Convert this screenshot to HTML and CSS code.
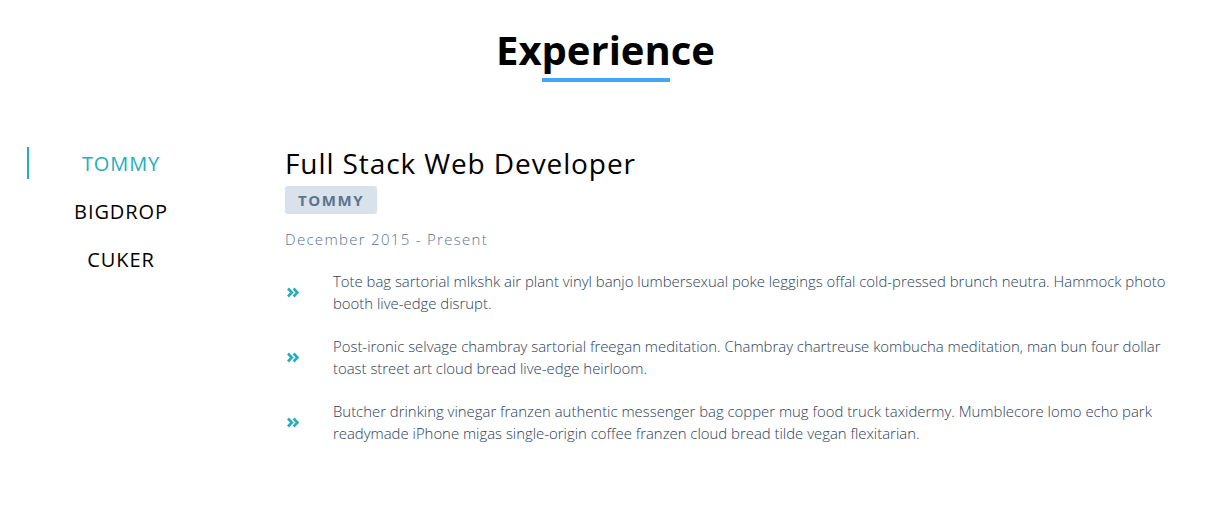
FILE: index.html
```html
<!DOCTYPE html>
<html>
<head>
<meta charset="utf-8">
<link rel="stylesheet" href="styles.css">
</head>
<body>
<section class="experience">
  <header class="section-head">
    <h1 class="section-title">Experience</h1>
    <div class="title-bar"></div>
  </header>
  <div class="exp-body">
    <nav class="tabs">
      <div class="tab active">TOMMY</div>
      <div class="tab">BIGDROP</div>
      <div class="tab">CUKER</div>
    </nav>
    <div class="job">
      <h2 class="job-title">Full Stack Web Developer</h2>
      <span class="badge">TOMMY</span>
      <div class="date">December 2015 - Present</div>
      <ul class="duties">
        <li><span class="chev"><svg width="12" height="11" viewBox="0 0 12 11"><path d="M1 1.5 L4.8 5.5 L1 9.5 M6.6 1.5 L10.4 5.5 L6.6 9.5" fill="none" stroke="currentColor" stroke-width="2.6"/></svg></span><p>Tote bag sartorial mlkshk air plant vinyl banjo lumbersexual poke leggings offal cold-pressed brunch neutra. Hammock photo booth live-edge disrupt.</p></li>
        <li><span class="chev"><svg width="12" height="11" viewBox="0 0 12 11"><path d="M1 1.5 L4.8 5.5 L1 9.5 M6.6 1.5 L10.4 5.5 L6.6 9.5" fill="none" stroke="currentColor" stroke-width="2.6"/></svg></span><p>Post-ironic selvage chambray sartorial freegan meditation. Chambray chartreuse kombucha meditation, man bun four dollar toast street art cloud bread live-edge heirloom.</p></li>
        <li><span class="chev"><svg width="12" height="11" viewBox="0 0 12 11"><path d="M1 1.5 L4.8 5.5 L1 9.5 M6.6 1.5 L10.4 5.5 L6.6 9.5" fill="none" stroke="currentColor" stroke-width="2.6"/></svg></span><p>Butcher drinking vinegar franzen authentic messenger bag copper mug food truck taxidermy. Mumblecore lomo echo park readymade iPhone migas single-origin coffee franzen cloud bread tilde vegan flexitarian.</p></li>
      </ul>
    </div>
  </div>
</section>
</body>
</html>
```

FILE: styles.css
```css
* { box-sizing: border-box; }
body {
  margin: 0;
  background: #fff;
  font-family: "Open Sans", "Noto Sans", sans-serif;
  color: #000;
}
.experience { padding-top: 24px; }
.section-head {
  display: flex;
  flex-direction: column;
  align-items: center;
  padding-right: 6px;
}
.section-title {
  margin: 0;
  font-size: 40px;
  font-weight: 700;
  letter-spacing: 0;
  line-height: 52px;
}
.title-bar {
  width: 128px;
  height: 4px;
  background: #42a5f5;
  margin-top: 2px;
}
.exp-body {
  display: flex;
  margin-top: 64px;
  padding-left: 27px;
}
.tabs {
  width: 186px;
  flex: none;
  display: flex;
  flex-direction: column;
  padding-top: 1px;
}
.tab {
  height: 32px;
  line-height: 33px;
  text-align: center;
  font-size: 20px;
  letter-spacing: 0.9px;
  margin-bottom: 16px;
  border-left: 2px solid transparent;
}
.tab.active {
  color: #25adbd;
  border-left-color: #25adbd;
}
.job {
  margin-left: 72px;
  width: 900px;
}
.job-title {
  margin: 0;
  font-size: 28px;
  font-weight: 400;
  letter-spacing: 0.9px;
  line-height: 34px;
}
.badge {
  display: inline-block;
  margin-top: 6px;
  padding: 0 13px;
  height: 28px;
  line-height: 29px;
  background: #d9e1ea;
  border-radius: 3px;
  color: #5b7591;
  font-weight: 700;
  font-size: 15px;
  letter-spacing: 1.6px;
}
.date {
  margin-top: 14px;
  font-size: 15px;
  font-weight: 300;
  letter-spacing: 1.3px;
  color: #58749a;
  line-height: 22px;
}
.duties {
  list-style: none;
  margin: 20px 0 0;
  padding: 0;
}
.duties li {
  display: flex;
  align-items: center;
  margin-bottom: 21px;
}
.chev {
  width: 48px;
  flex: none;
  color: #25adbd;
  display: flex;
  padding-left: 2px;
}
.duties p {
  margin: 0;
  font-size: 14.9px;
  font-weight: 300;
  line-height: 22px;
  color: #2c405a;
}
```
